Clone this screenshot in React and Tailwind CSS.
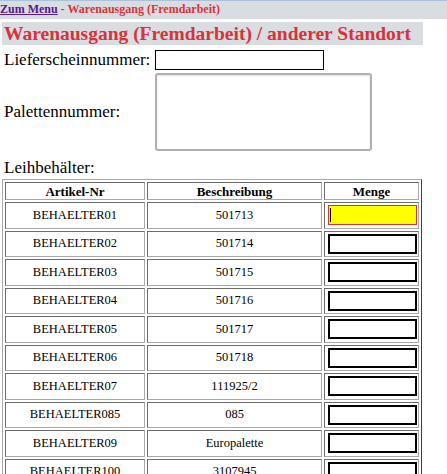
import React from "react";

const rows = [
  ["BEHAELTER01", "501713"],
  ["BEHAELTER02", "501714"],
  ["BEHAELTER03", "501715"],
  ["BEHAELTER04", "501716"],
  ["BEHAELTER05", "501717"],
  ["BEHAELTER06", "501718"],
  ["BEHAELTER07", "111925/2"],
  ["BEHAELTER085", "085"],
  ["BEHAELTER09", "Europalette"],
  ["BEHAELTER100", "3107945"],
];

const cell =
  "border border-t-[#6b6b6b] border-l-[#6b6b6b] border-r-[#a8a8a8] border-b-[#a8a8a8] text-center p-0";

export default function App() {
  return (
    <div
      className="min-h-[474px] bg-white text-black"
      style={{ fontFamily: '"Liberation Serif", "Times New Roman", serif' }}
    >
      <div className="h-[19px] border-t border-[#aac2dc] bg-[#d9dce1] text-[12px] font-bold leading-[17px] whitespace-nowrap">
        <a href="#" className="text-[#551a8b] underline">
          Zum Menu
        </a>
        <span className="text-[#d8323a]"> - Warenausgang (Fremdarbeit)</span>
      </div>

      <div className="mt-[3px] ml-[2px] w-[421px] h-[23px] bg-[#d9dce1] pl-[2px] text-[19.5px] font-bold leading-[23px] text-[#d8323a] whitespace-nowrap">
        Warenausgang (Fremdarbeit) / anderer Standort
      </div>

      <div className="mt-[5px] grid grid-cols-[151px_auto] gap-y-[3px] pl-[4px] text-[17px] leading-[20px]">
        <div className="flex items-center whitespace-nowrap">Lieferscheinnummer:</div>
        <div>
          <input
            type="text"
            className="block w-[169px] h-[20px] border border-black bg-white outline-none"
          />
        </div>
        <div className="flex items-center whitespace-nowrap">Palettennummer:</div>
        <div>
          <textarea className="block w-[217px] h-[78px] resize-none rounded-[3px] border-2 border-[#b0b0b0] bg-white shadow-[inset_0_1px_2px_rgba(0,0,0,0.12)] outline-none" />
        </div>
      </div>

      <div className="mt-[7px] pl-[4px] text-[17px] leading-[20px]">Leihbehälter:</div>

      <table className="mt-[1px] ml-[2px] w-[420px] table-fixed border-separate border-spacing-[2px] border border-t-[#a8a8a8] border-l-[#a8a8a8] border-r-[#404040] border-b-[#404040] text-[13px] leading-[15px]">
        <thead>
          <tr>
            <th className={`${cell} w-[140px] h-[18px] font-bold`}>Artikel-Nr</th>
            <th className={`${cell} w-[175px] h-[18px] font-bold`}>Beschreibung</th>
            <th className={`${cell} w-[95px] h-[18px] font-bold`}>Menge</th>
          </tr>
        </thead>
        <tbody className="text-[12.5px]">
          {rows.map(([a, b], i) => (
            <tr key={a}>
              <td className={`${cell} h-[26.5px]`}>{a}</td>
              <td className={`${cell} h-[26.5px]`}>{b}</td>
              <td className={`${cell} h-[26.5px] pl-[3px] pr-[1px] text-left`}>
                {i === 0 ? (
                  <div className="relative w-[89px] h-[20px]">
                    <input
                      type="text"
                      className="block w-[89px] h-[20px] border border-[#d8323a] bg-[#ffff00] outline-none"
                    />
                    <span className="absolute left-[2px] top-[3px] w-[1px] h-[14px] bg-black" />
                  </div>
                ) : (
                  <input
                    type="text"
                    className="block w-[89px] h-[20px] border-2 border-black bg-white outline-none"
                  />
                )}
              </td>
            </tr>
          ))}
        </tbody>
      </table>
    </div>
  );
}
